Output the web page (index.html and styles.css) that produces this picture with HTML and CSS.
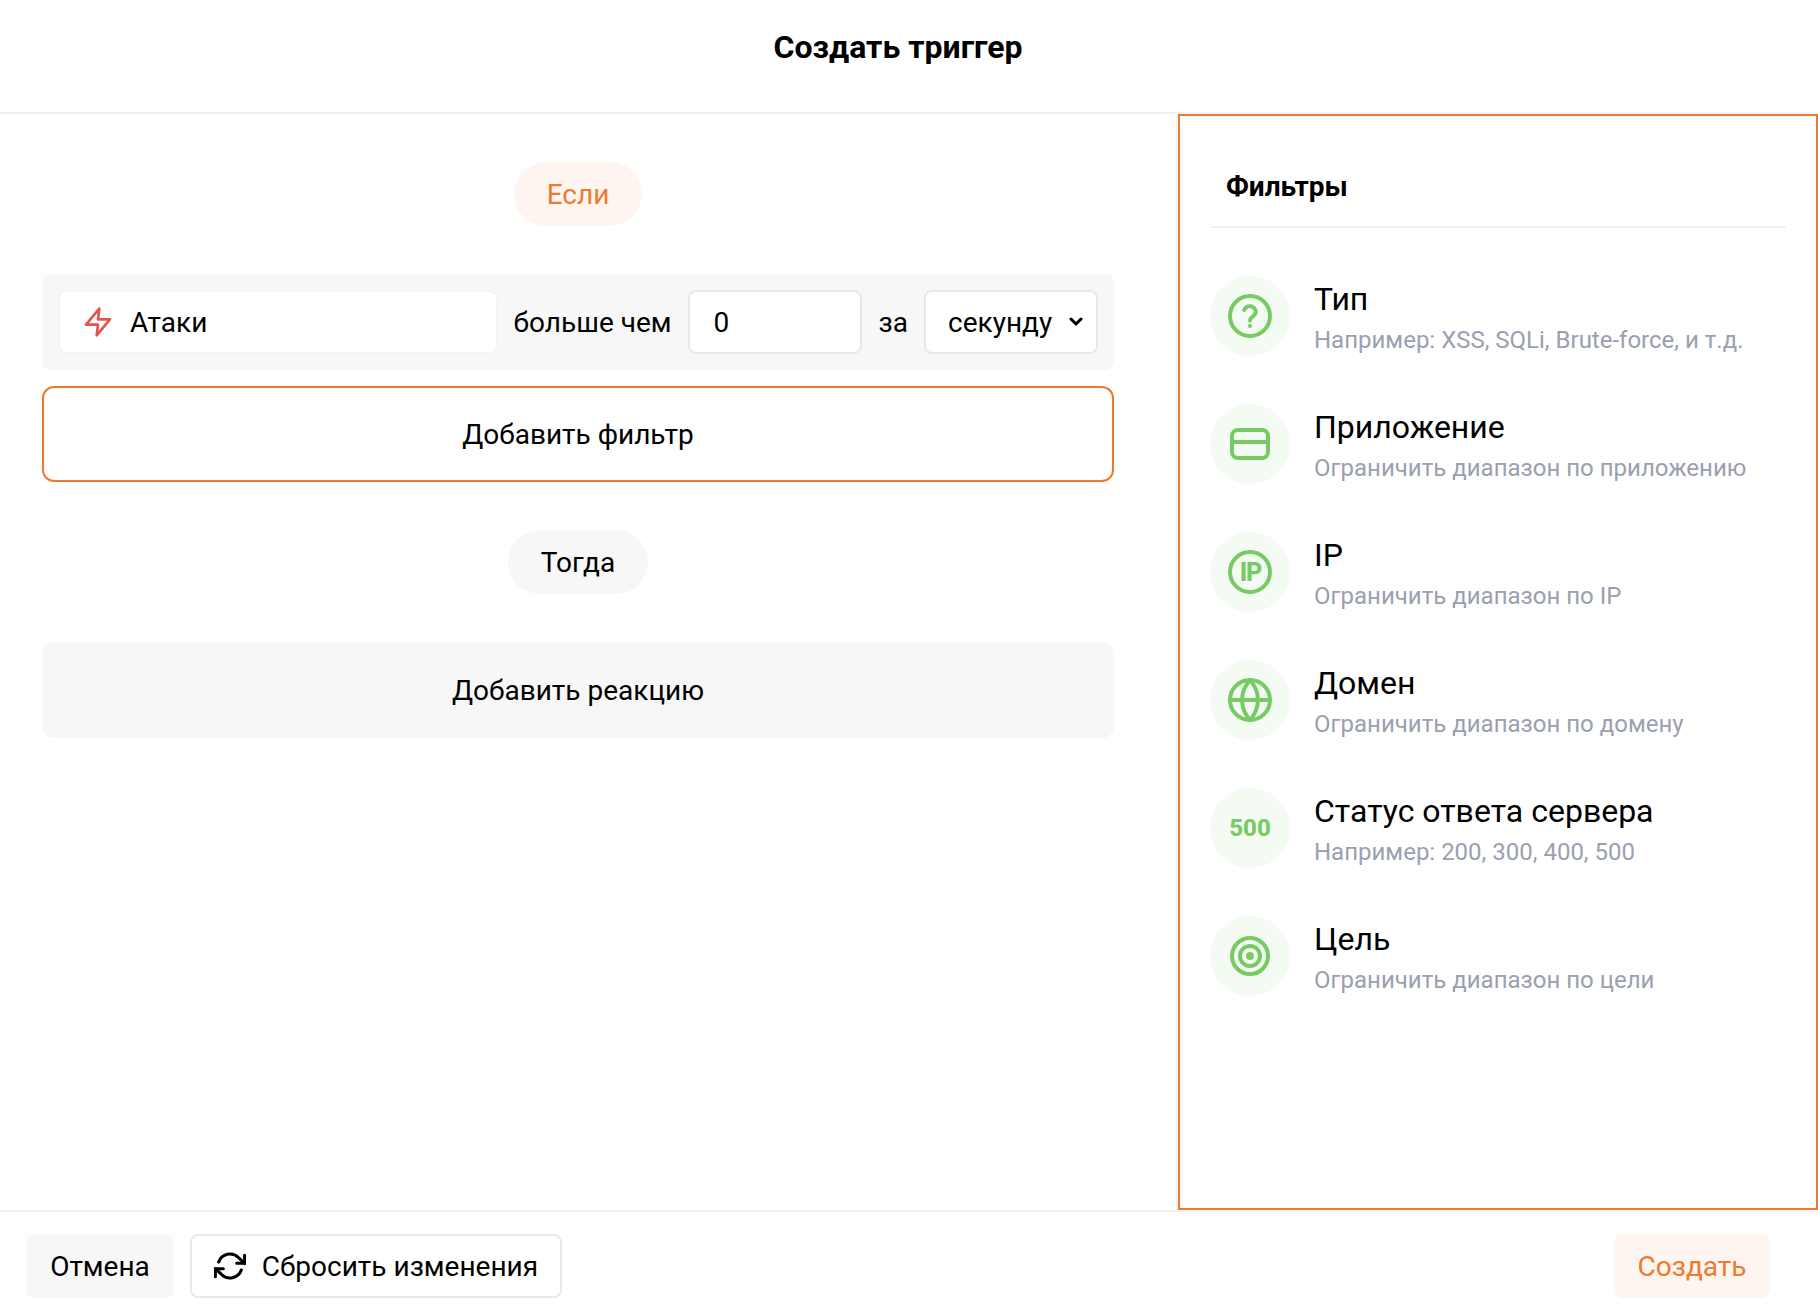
FILE: index.html
```html
<!DOCTYPE html>
<html lang="ru">
<head>
<meta charset="utf-8">
<title>Создать триггер</title>
<link rel="stylesheet" href="styles.css">
</head>
<body>
<div class="dialog">
  <header class="header"><h1 class="title">Создать триггер</h1></header>
  <div class="content">
    <main class="builder">
      <div class="pill pill-accent">Если</div>
      <section class="condition">
        <div class="event">
          <svg class="event-icon" viewBox="0 0 24 24"><path d="M13 2 3 14h9l-1 8 10-12h-9z"/></svg>
          <span class="label">Атаки</span>
        </div>
        <span class="label">больше чем</span>
        <div class="field count"><span class="label">0</span></div>
        <span class="label">за</span>
        <div class="field period"><span class="label">секунду</span><svg class="chevron" viewBox="0 0 14 10"><path d="m2 2 5 5 5-5"/></svg></div>
      </section>
      <button class="add add-filter">Добавить фильтр</button>
      <div class="pill pill-then">Тогда</div>
      <button class="add">Добавить реакцию</button>
    </main>
    <aside class="filters">
      <h2 class="filters-title">Фильтры</h2>
      <ul class="list">
        <li class="item">
          <span class="badge"><svg viewBox="0 0 24 24"><circle cx="12" cy="12" r="10"/><path d="M9.1 9a3 3 0 0 1 5.8 1c0 2-2.9 2.5-2.9 4.2M12 17v.01"/></svg></span>
          <div><div class="name">Тип</div><div class="hint">Например: XSS, SQLi, Brute-force, и т.д.</div></div>
        </li>
        <li class="item">
          <span class="badge"><svg viewBox="0 0 24 24"><rect x="3" y="5" width="18" height="14" rx="3"/><path d="M3 11h18"/></svg></span>
          <div><div class="name">Приложение</div><div class="hint">Ограничить диапазон по приложению</div></div>
        </li>
        <li class="item">
          <span class="badge"><svg viewBox="0 0 24 24"><circle cx="12" cy="12" r="10"/><text class="ip" x="6.9" y="16.5">IP</text></svg></span>
          <div><div class="name">IP</div><div class="hint">Ограничить диапазон по IP</div></div>
        </li>
        <li class="item">
          <span class="badge"><svg viewBox="0 0 24 24"><circle cx="12" cy="12" r="10"/><path d="M2 12h20M12 2a15.3 15.3 0 0 1 4 10 15.3 15.3 0 0 1-4 10 15.3 15.3 0 0 1-4-10 15.3 15.3 0 0 1 4-10z"/></svg></span>
          <div><div class="name">Домен</div><div class="hint">Ограничить диапазон по домену</div></div>
        </li>
        <li class="item">
          <span class="badge badge-text">500</span>
          <div><div class="name">Статус ответа сервера</div><div class="hint">Например: 200, 300, 400, 500</div></div>
        </li>
        <li class="item">
          <span class="badge"><svg viewBox="0 0 24 24"><circle cx="12" cy="12" r="9"/><circle cx="12" cy="12" r="5"/><circle cx="12" cy="12" r="1"/></svg></span>
          <div><div class="name">Цель</div><div class="hint">Ограничить диапазон по цели</div></div>
        </li>
      </ul>
    </aside>
  </div>
  <footer class="footer">
    <button class="btn cancel"><span class="label">Отмена</span></button>
    <button class="btn reset"><svg class="reset-icon" viewBox="0 0 24 24"><path d="M23 4v6h-6M1 20v-6h6"/><path d="M3.51 9a9 9 0 0 1 14.85-3.36L23 10M1 14l4.64 4.36A9 9 0 0 0 20.49 15"/></svg><span class="label">Сбросить изменения</span></button>
    <button class="btn create"><span class="label">Создать</span></button>
  </footer>
</div>
</body>
</html>
```
FILE: styles.css
```css
* { box-sizing: border-box; }
body { margin: 0; background: #fff; color: #000; font: 28px/40px Roboto, sans-serif; }
button { font: inherit; color: inherit; border: 0; padding: 0; margin: 0; }
svg { fill: none; stroke: currentColor; stroke-width: 2; stroke-linecap: round; stroke-linejoin: round; flex: none; }

.dialog { display: flex; flex-direction: column; height: 1307px; }
.header { height: 114px; padding: 27px 22px 0 0; border-bottom: 2px solid #f2f2f3; text-align: center; }
.title { margin: 0; font-size: 32px; line-height: 40px; font-weight: 700; }
.content { display: flex; height: 1096px; }

.builder { flex: 1; display: flex; flex-direction: column; align-items: center; padding: 48px 62px 0 42px; border-right: 2px solid #f2f2f3; }
.pill { width: 140px; height: 64px; border-radius: 32px; line-height: 66px; text-align: center; background: #f7f7f7; }
.pill-accent { width: 128px; background: #fef5f0; color: #ed7a30; }
.pill-then { margin: 48px 0; }
.condition { display: flex; align-items: center; gap: 16px; width: 100%; height: 96px; margin: 48px 0 16px; padding: 0 16px; border-radius: 8px; background: #f7f7f7; }
.event { flex: 1; display: flex; align-items: center; gap: 16px; height: 64px; padding: 0 22px; border: 2px solid #f4f4f5; border-radius: 8px; background: #fff; }
.event-icon { width: 32px; height: 32px; color: #e5534b; }
.label { padding-top: 2px; white-space: nowrap; }
.field { display: flex; align-items: center; width: 174px; height: 64px; padding: 0 24px; border: 2px solid #e8e7ed; border-radius: 8px; background: #fff; }
.count { margin-right: 1px; }
.period { justify-content: space-between; padding: 0 13px 0 22px; }
.chevron { width: 14px; height: 10px; stroke-width: 3; }
.add { width: 100%; height: 96px; padding-top: 2px; border-radius: 12px; background: #f7f7f7; }
.add-filter { border: 2px solid #ed7a30; background: #fff; }

.filters { width: 640px; padding: 46px 30px 0; border: 2px solid #ed7a30; }
.filters-title { height: 66px; margin: 0 0 48px; padding: 5px 16px 0; border-bottom: 2px solid #f2f2f3; font-size: 28px; line-height: 40px; font-weight: 700; }
.list { display: flex; flex-direction: column; gap: 48px; margin: 0; padding: 0; list-style: none; }
.item { display: flex; gap: 24px; height: 80px; }
.badge { display: flex; align-items: center; justify-content: center; width: 80px; height: 80px; border-radius: 50%; background: #f4fbf3; color: #76cb63; }
.badge-text { font-size: 24px; font-weight: 800; }
.badge svg { width: 48px; height: 48px; }
.ip { fill: currentColor; stroke: none; font-size: 12.6px; font-weight: 800; letter-spacing: -0.7px; }
.name { margin-top: 3px; font-size: 32px; line-height: 40px; }
.hint { margin-top: 5px; font-size: 24px; line-height: 32px; color: #9aa0b1; white-space: nowrap; }

.footer { display: flex; gap: 16px; height: 97px; padding: 22px 48px 0 26px; border-top: 2px solid #f2f2f3; }
.btn { display: flex; align-items: center; justify-content: center; height: 64px; border-radius: 8px; }
.cancel { width: 148px; background: #f7f7f7; }
.reset { gap: 16px; width: 372px; border: 2px solid #e8e7ed; background: #fff; }
.reset-icon { width: 32px; height: 32px; stroke-width: 2.3; }
.create { width: 156px; margin-left: auto; background: #fef5f0; color: #ed7a30; }
```
